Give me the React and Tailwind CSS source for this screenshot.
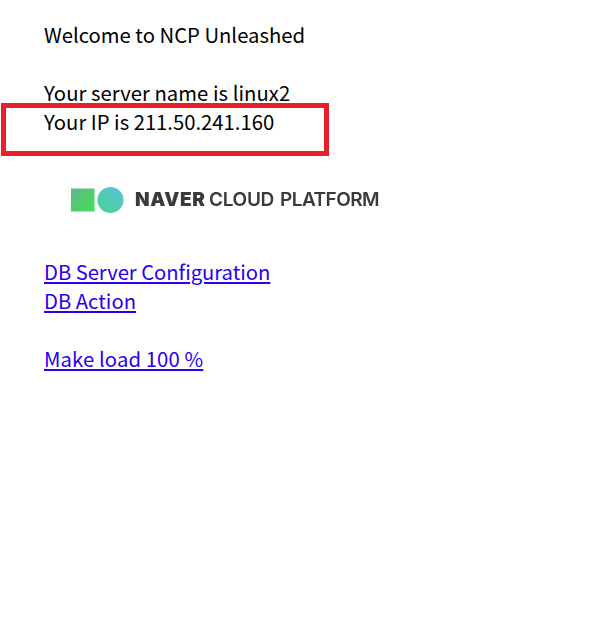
export default function App() {
  return (
    <div className="relative min-h-[643px] bg-white pl-[44px] pt-[20px] text-[20.25px] leading-[29px] text-black font-['Noto_Sans_CJK_KR','Noto_Sans_CJK_JP',sans-serif]">
      <div>Welcome to NCP Unleashed</div>
      <br />
      <div className="tracking-[0.04px]">Your server name is linux2</div>
      <div>Your IP is 211.50.241.160</div>
      <div className="flex h-[121px] items-center pt-[6px] pl-[27px]">
        <div className="flex items-center blur-[0.6px]">
          <svg width="53" height="26" viewBox="0 0 53 26" className="shrink-0">
            <defs>
              <linearGradient id="sq" x1="0" y1="0" x2="1" y2="1">
                <stop offset="0" stopColor="#5fb58a" />
                <stop offset="1" stopColor="#45e055" />
              </linearGradient>
              <linearGradient id="ci" x1="0" y1="1" x2="1" y2="0">
                <stop offset="0" stopColor="#44d68a" />
                <stop offset="1" stopColor="#5cc0e0" />
              </linearGradient>
            </defs>
            <rect x="0" y="1.5" width="23.5" height="23" fill="url(#sq)" />
            <circle cx="39.5" cy="13" r="13" fill="url(#ci)" />
          </svg>
          <div className="ml-[11px] flex items-baseline whitespace-nowrap text-[#3a3a3a] font-['Inter',sans-serif] text-[19px] leading-none">
            <span className="font-black tracking-[0.6px]">NAVER</span>
            <span className="ml-[3.5px] font-semibold tracking-[-0.3px]">CLOUD</span>
            <span className="ml-[6px] font-semibold tracking-[-0.55px]">PLATFORM</span>
          </div>
        </div>
      </div>
      <div><a href="#" className="text-[#2a00ee] underline tracking-[-0.04px]">DB Server Configuration</a></div>
      <div><a href="#" className="text-[#2a00ee] underline">DB Action</a></div>
      <br />
      <div><a href="#" className="text-[#2a00ee] underline tracking-[0.12px]">Make load 100 %</a></div>
      <div className="absolute left-[1px] top-[103px] h-[53px] w-[328px] border-[5px] border-[#e8202a]" />
    </div>
  );
}
